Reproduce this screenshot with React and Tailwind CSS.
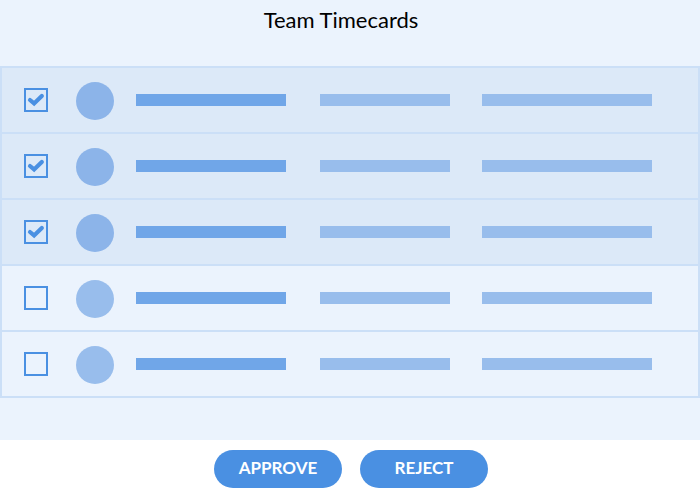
import { useState } from "react";

const members = [
  { id: 1, approved: true },
  { id: 2, approved: true },
  { id: 3, approved: true },
  { id: 4, approved: false },
  { id: 5, approved: false },
];

function TimecardRow({ id, checked, onToggle }) {
  return (
    <li
      className={`flex h-[66px] items-center border-b-2 border-[#cbdff7] pl-[22px] pr-[46px] ${
        checked ? "bg-[#dce9f8]" : "bg-[#ebf3fd]"
      }`}
    >
      <label className="grid size-6 shrink-0 cursor-pointer place-items-center">
        <input
          type="checkbox"
          aria-label={`Select timecard ${id}`}
          checked={checked}
          onChange={onToggle}
          className="col-start-1 row-start-1 size-6 appearance-none border-2 border-[#4a90e2]"
        />
        {checked && (
          <svg
            viewBox="0 0 24 24"
            className="pointer-events-none col-start-1 row-start-1 size-6"
            fill="none"
            stroke="#4a90e2"
            strokeWidth="4.2"
            strokeLinecap="round"
            aria-hidden="true"
          >
            <path d="M6 12 L10.1 15.4 L17.8 8" />
          </svg>
        )}
      </label>
      <div
        className={`ml-7 mt-0.5 size-[38px] shrink-0 rounded-full ${
          checked ? "bg-[#8cb4e9]" : "bg-[#98bdec]"
        }`}
      />
      <div className="ml-[22px] grid h-3 flex-1 grid-cols-[184fr_162fr_170fr]">
        <div className="mr-[34px] bg-[#70a6e8]" />
        <div className="mr-8 bg-[#98bdec]" />
        <div className="bg-[#98bdec]" />
      </div>
    </li>
  );
}

function ActionButton({ children }) {
  return (
    <button
      type="button"
      className="h-[38px] w-32 cursor-pointer rounded-full bg-[#4a90e2] pb-0.5 text-[17px] leading-5 font-bold text-white"
    >
      {children}
    </button>
  );
}

export default function App() {
  const [rows, setRows] = useState(members);
  const toggle = (id) =>
    setRows(rows.map((r) => (r.id === id ? { ...r, approved: !r.approved } : r)));

  return (
    <div className="flex min-h-screen flex-col bg-white font-['Lato',sans-serif]">
      <main className="bg-[#ebf3fd] pb-[42px]">
        <h1 className="h-[66px] pt-1 pr-[18px] text-center text-[22px] leading-8 font-normal text-black">
          Team Timecards
        </h1>
        <ul className="border-x-2 border-t-2 border-[#cbdff7]">
          {rows.map((r) => (
            <TimecardRow
              key={r.id}
              id={r.id}
              checked={r.approved}
              onToggle={() => toggle(r.id)}
            />
          ))}
        </ul>
      </main>
      <footer className="flex justify-center gap-[18px] py-2.5 pl-0.5">
        <ActionButton>APPROVE</ActionButton>
        <ActionButton>REJECT</ActionButton>
      </footer>
    </div>
  );
}
